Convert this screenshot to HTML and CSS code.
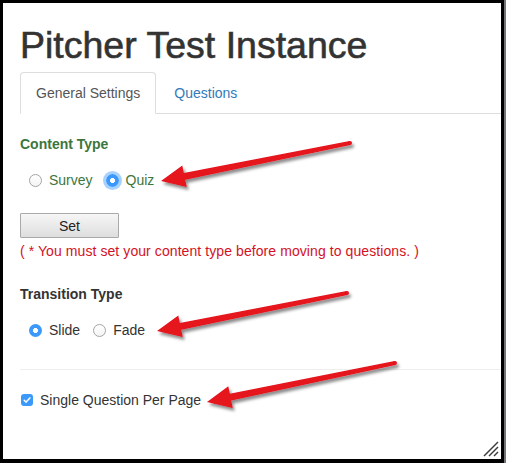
FILE: index.html
```html
<!DOCTYPE html>
<html lang="en">
<head>
  <meta charset="UTF-8">
  <meta name="viewport" content="width=device-width, initial-scale=1.0">
  <title>Pitcher Test Instance</title>
  <link rel="stylesheet" href="styles.css">
</head>
<body>
  <div class="window">
    <h1>Pitcher Test Instance</h1>

    <ul class="nav-tabs">
      <li class="active"><a href="#">General Settings</a></li>
      <li><a href="#">Questions</a></li>
    </ul>

    <div class="tab-content">
      <div class="group success">
        <div class="group-label">Content Type</div>
        <div class="options">
          <label class="option"><input type="radio" name="content"><span class="radio"></span>Survey</label>
          <label class="option"><input type="radio" name="content" checked><span class="radio checked focus"></span>Quiz</label>
        </div>
      </div>

      <button class="set-btn" type="button">Set</button>
      <p class="error">( * You must set your content type before moving to questions. )</p>

      <div class="group">
        <div class="group-label transition">Transition Type</div>
        <div class="options">
          <label class="option"><input type="radio" name="transition" checked><span class="radio checked"></span>Slide</label>
          <label class="option"><input type="radio" name="transition"><span class="radio"></span>Fade</label>
        </div>
      </div>

      <hr>

      <label class="check-row">
        <input type="checkbox" checked>
        <span class="checkbox">
          <svg width="12" height="12" viewBox="0 0 12 12"><path d="M3.2 6.2 L5.1 8.1 L8.9 3.9" fill="none" stroke="#fff" stroke-width="1.5" stroke-linecap="round" stroke-linejoin="round"/></svg>
        </span>
        Single Question Per Page
      </label>
    </div>

    <!-- annotation arrows drawn over the screenshot -->
    <svg class="arrows" width="506" height="463" viewBox="0 0 506 463">
      <defs>
        <filter id="shadow" x="-10%" y="-50%" width="120%" height="200%">
          <feDropShadow dx="2" dy="3" stdDeviation="1.6" flood-color="#000" flood-opacity="0.45"/>
        </filter>
      </defs>
      <g fill="#e5121d" filter="url(#shadow)">
        <path d="M161 181 L186.7 187.1 L185.2 179.7 L350.4 145 L349.6 141 L183.8 172.9 L182.3 165.5 Z"/>
        <circle cx="350" cy="143" r="2"/>
        <path d="M157 331 L182.7 337.1 L181.2 329.7 L347.4 295 L346.6 291 L179.8 322.9 L178.3 315.5 Z"/>
        <circle cx="347" cy="293" r="2"/>
        <path d="M207 402 L232.7 407.9 L231.2 400.5 L395.4 365 L394.6 361 L229.8 393.7 L228.3 386.3 Z"/>
        <circle cx="395" cy="363" r="2"/>
      </g>
    </svg>

    <svg class="grip" width="16" height="16" viewBox="0 0 16 16">
      <g stroke="#3a3a3a" stroke-width="1.4">
        <line x1="15" y1="1" x2="1" y2="15"/>
        <line x1="15" y1="6" x2="6" y2="15"/>
        <line x1="15" y1="11" x2="11" y2="15"/>
      </g>
    </svg>
  </div>
</body>
</html>
```

FILE: styles.css
```css
/* Frame */
html {
  background-color: #000;
}

body {
  margin: 0;
  padding: 3px 5px 4px 3px;
  font-family: "Liberation Sans", Arial, sans-serif;
  font-size: 14px;
  line-height: 20px;
  color: #333;
  background: linear-gradient(to right, #000 504px, #72767c 504px);
}

.window {
  position: relative;
  height: 456px;
  background-color: #fff;
  padding-left: 17px;
  overflow: hidden;
}

h1 {
  margin: 22px 0 7px;
  font-size: 37.5px;
  line-height: 40px;
  font-weight: normal;
  color: #333;
  -webkit-text-stroke: 0.6px #333;
}

/* Tabs */
.nav-tabs {
  display: flex;
  margin: 0;
  padding: 0;
  list-style: none;
  border-bottom: 1px solid #ddd;
}

.nav-tabs li {
  margin-bottom: -1px;
  margin-right: 2px;
}

.nav-tabs a {
  display: block;
  padding: 10px 15px;
  border: 1px solid transparent;
  border-radius: 4px 4px 0 0;
  color: #337ab7;
  text-decoration: none;
}

.nav-tabs .active a {
  color: #555;
  background-color: #fff;
  border-color: #ddd #ddd transparent;
}

/* Form */
.tab-content {
  padding-top: 20px;
}

.group-label {
  font-weight: bold;
}

.success .group-label,
.success .option {
  color: #3c763d;
}

.group-label.transition {
  margin-top: 23px;
}

.options {
  display: flex;
  gap: 13px;
  margin-top: 16px;
  padding-left: 9px;
}

.option {
  display: flex;
  align-items: center;
  gap: 7px;
}

.option input,
.check-row input {
  position: absolute;
  opacity: 0;
  width: 0;
  height: 0;
}

.radio {
  width: 13px;
  height: 13px;
  box-sizing: border-box;
  border: 1px solid #a4a4a4;
  border-radius: 50%;
  background: linear-gradient(#fff, #f4f4f4);
}

.radio.checked {
  border: none;
  background: radial-gradient(circle, #fff 0 2.2px, #3b99fc 2.8px);
}

.radio.focus {
  box-shadow: 0 0 0 3px rgba(59, 153, 252, 0.45);
}

.set-btn {
  display: block;
  margin-top: 23px;
  width: 99px;
  height: 25px;
  padding: 0;
  font-family: inherit;
  font-size: 14px;
  color: #222;
  background: linear-gradient(#f6f6f6, #dedede);
  border: 1px solid #a9a9a9;
  border-radius: 1px;
}

.error {
  margin: 3px 0 0;
  color: #d4111e;
  letter-spacing: 0.08px;
}

hr {
  margin: 29px 0 0;
  border: none;
  border-top: 1px solid #eee;
}

.check-row {
  display: flex;
  align-items: center;
  gap: 7px;
  margin-top: 20px;
  padding-left: 1px;
}

.checkbox {
  display: block;
  width: 12px;
  height: 12px;
  border-radius: 3px;
  background-color: #3b99fc;
}

.checkbox svg {
  display: block;
}

/* Overlays */
.arrows {
  position: absolute;
  left: -3px;
  top: -3px;
  pointer-events: none;
}

.grip {
  position: absolute;
  right: 2px;
  bottom: 2px;
}
```
